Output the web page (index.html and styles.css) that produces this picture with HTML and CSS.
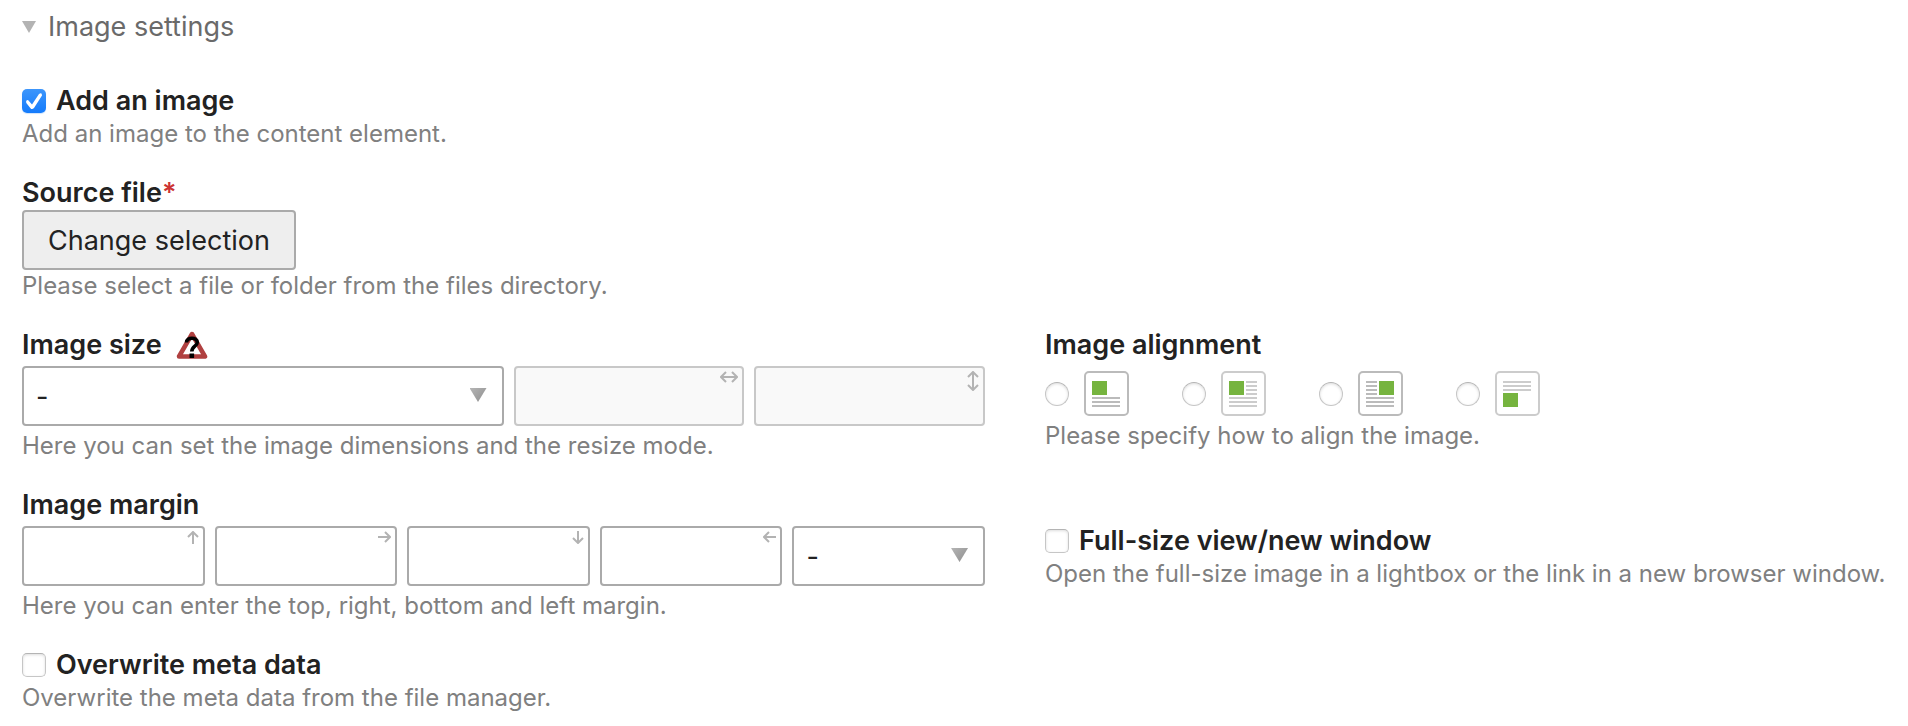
FILE: index.html
```html
<!DOCTYPE html>
<html lang="en">
<head>
<meta charset="utf-8">
<title>Image settings</title>
<link rel="stylesheet" href="styles.css">
</head>
<body>
<form class="panel">
  <h2 class="legend"><button type="button" class="toggle" aria-expanded="true">Image settings</button></h2>
  <div class="fields">
    <div class="field wide">
      <div class="check"><input type="checkbox" id="add" class="box" checked><label for="add" class="label">Add an image</label></div>
      <p class="help">Add an image to the content element.</p>
    </div>

    <div class="field wide">
      <div class="label" id="source-label">Source file<span class="required">*</span></div>
      <button type="button" class="button" id="source">Change selection</button>
      <p class="help">Please select a file or folder from the files directory.</p>
    </div>

    <div class="field">
      <div class="label with-icon">
        <label for="size">Image size</label>
        <svg class="hint" viewBox="0 0 32 28" width="32" height="28" aria-hidden="true">
          <path d="M16 3 L29 25.500 H3 Z" fill="#fff" stroke="#b04040" stroke-width="4.500" stroke-linejoin="round"/>
          <path d="M10.500 11.500 C10.500 5.800 21.300 5.800 21.300 11.300 C21.300 15.300 15.800 15.200 15.800 20.500" fill="none" stroke="#000" stroke-width="3.600"/>
          <rect x="13.500" y="22.500" width="4.600" height="4.500" fill="#000"/>
        </svg>
      </div>
      <div class="controls">
        <div class="select half"><select id="size"><option>-</option></select></div>
        <div class="entry"><input type="text" class="input" aria-label="Width" disabled>
          <svg class="arrow" width="18" height="12" viewBox="0 0 18 12"><path d="M1 6H17M6 1L1 6L6 11M12 1L17 6L12 11"/></svg></div>
        <div class="entry"><input type="text" class="input" aria-label="Height" disabled>
          <svg class="arrow" width="12" height="20" viewBox="0 0 12 20"><path d="M6 1V19M1 6L6 1L11 6M1 14L6 19L11 14"/></svg></div>
      </div>
      <p class="help">Here you can set the image dimensions and the resize mode.</p>
    </div>

    <fieldset class="field">
      <legend class="label">Image alignment</legend>
      <div class="radios">
        <label class="option"><input type="radio" name="align" class="dot" aria-label="Above">
          <svg class="picture dark" viewBox="0 0 46 46" width="46" height="46"><rect class="frame" x="1" y="1" width="43" height="43" rx="4"/><path class="image" d="M8 10h15v14H8z"/><path class="lines" d="M8 27h28M8 31h28M8 35h28"/></svg></label>
        <label class="option"><input type="radio" name="align" class="dot" aria-label="Left">
          <svg class="picture" viewBox="0 0 46 46" width="46" height="46"><rect class="frame" x="1" y="1" width="43" height="43" rx="4"/><path class="image" d="M8 10h15v14H8z"/><path class="lines" d="M25 11h11M25 15h11M25 19h11M25 23h11M8 27h28M8 31h28M8 35h28"/></svg></label>
        <label class="option"><input type="radio" name="align" class="dot" aria-label="Right">
          <svg class="picture dark" viewBox="0 0 46 46" width="46" height="46"><rect class="frame" x="1" y="1" width="43" height="43" rx="4"/><path class="image" d="M21 10h15v14H21z"/><path class="lines" d="M8 11h11M8 15h11M8 19h11M8 23h11M8 27h28M8 31h28M8 35h28"/></svg></label>
        <label class="option"><input type="radio" name="align" class="dot" aria-label="Below">
          <svg class="picture" viewBox="0 0 46 46" width="46" height="46"><rect class="frame" x="1" y="1" width="43" height="43" rx="4"/><path class="image" d="M8 22h15v14H8z"/><path class="lines" d="M8 11h28M8 15h28M8 19h28"/></svg></label>
      </div>
      <p class="help">Please specify how to align the image.</p>
    </fieldset>

    <fieldset class="field">
      <legend class="label">Image margin</legend>
      <div class="controls">
        <div class="entry"><input type="text" class="input" aria-label="Top">
          <svg class="arrow" width="12" height="13" viewBox="0 0 12 13"><path d="M6 13V1M1 6L6 1L11 6"/></svg></div>
        <div class="entry"><input type="text" class="input" aria-label="Right">
          <svg class="arrow" width="13" height="12" viewBox="0 0 13 12"><path d="M0 6H12M7 1L12 6L7 11"/></svg></div>
        <div class="entry"><input type="text" class="input" aria-label="Bottom">
          <svg class="arrow" width="12" height="13" viewBox="0 0 12 13"><path d="M6 0V12M1 7L6 12L11 7"/></svg></div>
        <div class="entry"><input type="text" class="input" aria-label="Left">
          <svg class="arrow" width="13" height="12" viewBox="0 0 13 12"><path d="M13 6H1M6 1L1 6L6 11"/></svg></div>
        <div class="select unit"><select aria-label="Unit"><option>-</option></select></div>
      </div>
      <p class="help">Here you can enter the top, right, bottom and left margin.</p>
    </fieldset>

    <div class="field lowered">
      <div class="check"><input type="checkbox" id="full" class="box"><label for="full" class="label">Full-size view/new window</label></div>
      <p class="help">Open the full-size image in a lightbox or the link in a new browser window.</p>
    </div>

    <div class="field wide">
      <div class="check"><input type="checkbox" id="meta" class="box"><label for="meta" class="label">Overwrite meta data</label></div>
      <p class="help">Overwrite the meta data from the file manager.</p>
    </div>
  </div>
</form>
</body>
</html>
```

FILE: styles.css
```css
* {
  box-sizing: border-box;
}

body {
  margin: 0;
  background: #fff;
  color: #222;
  font-family: Inter, "Liberation Sans", sans-serif;
  font-size: 27px;
}

.panel {
  padding: 10px 22px 16px;
}

.legend {
  margin: 0 0 40px;
  font-size: 27px;
  font-weight: 400;
  line-height: 34px;
}

.toggle {
  display: flex;
  align-items: center;
  gap: 12px;
  padding: 0;
  border: 0;
  background: none;
  color: #6a6a6a;
  font: inherit;
}

.toggle::before {
  content: "";
  width: 14px;
  height: 12px;
  background: #b3b3b3;
  clip-path: polygon(0 0, 100% 0, 50% 100%);
}

.fields {
  display: grid;
  grid-template-columns: minmax(0, 963fr) minmax(0, 841fr);
  gap: 26px 60px;
}

.field {
  min-width: 0;
  margin: 0;
  padding: 0;
  border: 0;
}

.wide {
  grid-column: 1 / -1;
}

.lowered {
  margin-top: 36px;
}

.label {
  padding: 0;
  font-weight: 600;
  line-height: 34px;
}

.required {
  color: #c33;
}

.with-icon {
  display: flex;
  align-items: center;
  gap: 14px;
}

.help {
  margin: 0;
  color: #808080;
  font-size: 24px;
  line-height: 32px;
}

.check {
  display: flex;
  align-items: center;
  gap: 10px;
}

.box,
.dot {
  appearance: none;
  flex: none;
  width: 24px;
  height: 24px;
  margin: 0;
  border: 1px solid #c6c6c6;
  border-top-color: #b4b4b4;
  border-radius: 5px;
  background: #fff;
  box-shadow: inset 0 1px 3px #ddd;
}

.dot {
  border-radius: 50%;
}

.box:checked {
  display: grid;
  place-items: center;
  border: 0;
  background: linear-gradient(#3d96fb, #147bfc);
  box-shadow: 0 1px 1px #cfe3fb;
}

.box:checked::before {
  content: "";
  width: 16px;
  height: 16px;
  background: #fff;
  clip-path: path("M2 7 L6 11.500 L13 1 Q16 -1 16 2.400 L8 15 Q6 17 4.500 15.200 L0.300 10 Q-0.500 7 2 7 Z");
}

.button {
  display: block;
  height: 60px;
  padding: 0 24px;
  border: 2px solid #aaa;
  border-radius: 4px;
  background: #eee;
  color: #222;
  font: inherit;
}

.controls {
  display: flex;
  gap: 10px;
  padding: 4px 0;
}

.entry {
  position: relative;
  flex: 1;
  min-width: 0;
}

.input,
.select select {
  appearance: none;
  display: block;
  width: 100%;
  height: 60px;
  padding: 0 12px;
  border: 2px solid #aaa;
  border-radius: 4px;
  background: #fff;
  color: #222;
  font: inherit;
}

.input:disabled {
  border-color: #c8c8c8;
  background: #f9f9f9;
}

.arrow {
  position: absolute;
  top: 5px;
  right: 6px;
  fill: none;
  stroke: #b3b3b3;
  stroke-width: 2;
}

.select {
  position: relative;
}

.select::after {
  content: "";
  position: absolute;
  top: 22px;
  right: 17px;
  width: 17px;
  height: 14px;
  background: linear-gradient(135deg, #b5b5b5, #8e8e8e);
  clip-path: polygon(0 0, 100% 0, 50% 100%);
  pointer-events: none;
}

.half {
  flex: 0 0 50%;
}

.unit {
  flex: 0 0 20%;
}

.radios {
  display: flex;
  gap: 52px;
  padding: 9px 0 3px;
}

.option {
  display: flex;
  align-items: center;
  gap: 15px;
}

.picture {
  color: #ccc;
}

.dark {
  color: #bbb;
}

.frame,
.lines {
  fill: none;
  stroke: currentColor;
  stroke-width: 2;
}

.image {
  fill: #76b43f;
}
```
